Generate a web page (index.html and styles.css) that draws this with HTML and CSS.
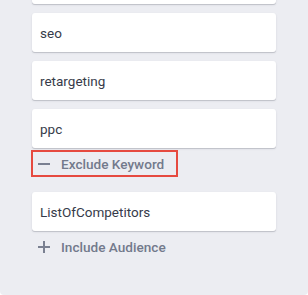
FILE: index.html
```html
<!DOCTYPE html>
<html>
<head>
<meta charset="utf-8">
<link rel="stylesheet" href="styles.css">
</head>
<body>
<div class="panel">
  <div class="list">
    <div class="card card-top"></div>
    <div class="card">seo</div>
    <div class="card">retargeting</div>
    <div class="card">ppc</div>
  </div>
  <button class="action action-focus">
    <svg class="icon" width="12" height="12" viewBox="0 0 12 12"><rect x="0" y="5" width="12" height="2" fill="currentColor"/></svg>
    <span>Exclude Keyword</span>
  </button>
  <div class="list list-second">
    <div class="card">ListOfCompetitors</div>
  </div>
  <button class="action action-include">
    <svg class="icon" width="12" height="12" viewBox="0 0 12 12"><rect x="0" y="5" width="12" height="2" fill="currentColor"/><rect x="5" y="0" width="2" height="12" fill="currentColor"/></svg>
    <span>Include Audience</span>
  </button>
</div>
</body>
</html>
```
FILE: styles.css
```css
html, body {
  margin: 0;
  padding: 0;
  background: #ffffff;
}
body {
  font-family: Roboto, "Liberation Sans", sans-serif;
  overflow: hidden;
}
.panel {
  width: 308px;
  height: 295px;
  box-sizing: border-box;
  background: #ecedf2;
  border-radius: 0 0 4px 4px;
  padding: 0 32px;
  overflow: hidden;
  display: flex;
  flex-direction: column;
  align-items: stretch;
}
.list {
  display: flex;
  flex-direction: column;
  gap: 9px;
}
.card {
  flex: none;
  height: 39px;
  background: #ffffff;
  border-radius: 3px;
  box-shadow: 0 1px 0 #c2c4cb, 0 1px 2px rgba(60, 64, 80, 0.15);
  display: flex;
  align-items: center;
  padding-left: 8px;
  font-size: 13.5px;
  color: #363b4a;
}
.card-top {
  margin-top: -35px;
}
.action {
  align-self: flex-start;
  width: max-content;
  display: flex;
  align-items: center;
  height: 23px;
  margin: 0 0 0 1px;
  padding: 0 12px 0 5px;
  border: none;
  background: transparent;
  font-family: inherit;
  font-size: 13.6px;
  font-weight: 500;
  color: #737a8c;
  cursor: pointer;
}
.action .icon {
  flex: none;
  margin-right: 11px;
  color: #7a8091;
}
.action-focus {
  margin-top: 4px;
  outline: 2px solid #e64a40;
  outline-offset: 0;
}
.list-second {
  margin-top: 17px;
}
.action-include {
  margin-top: 4px;
}
```
